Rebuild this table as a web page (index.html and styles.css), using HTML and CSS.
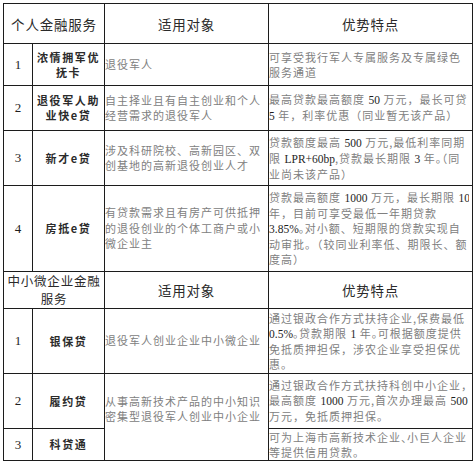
FILE: index.html
```html
<!DOCTYPE html>
<html lang="zh">
<head>
<meta charset="utf-8">
<link rel="stylesheet" href="styles.css">
</head>
<body>
<div class="wrap">
<table class="grid">
  <colgroup>
    <col class="c1"><col class="c2"><col class="c3"><col class="c4">
  </colgroup>
  <tr class="h40">
    <th colspan="2" class="hd">个人金融服务</th>
    <th class="hd">适用对象</th>
    <th class="hd">优势特点</th>
  </tr>
  <tr class="h42">
    <td class="num">1</td>
    <td class="name">浓情拥军优<br>抚卡</td>
    <td class="who">退役军人</td>
    <td class="adv"><div class="clip">可享受我行军人专属服务及专属绿色<br>服务通道</div></td>
  </tr>
  <tr class="h45">
    <td class="num">2</td>
    <td class="name">退役军人助<br>业快e贷</td>
    <td class="who">自主择业且有自主创业和个人<br>经营需求的退役军人</td>
    <td class="adv"><div class="clip">最高贷款最高额度 <span class="n">50</span> 万元，最长可贷<br><span class="n">5</span> 年，利率优惠（同业暂无该产品）</div></td>
  </tr>
  <tr class="h55">
    <td class="num">3</td>
    <td class="name">新才e贷</td>
    <td class="who">涉及科研院校、高新园区、双<br>创基地的高新退役创业人才</td>
    <td class="adv"><div class="clip">贷款额度最高 <span class="n">500</span> 万元<span class="p">,</span>最低利率同期<br>限 <span class="n">LPR+60bp</span><span class="p">,</span>贷款最长期限 <span class="n">3</span> 年<span class="h">。</span>（同<br>业尚未该产品）</div></td>
  </tr>
  <tr class="h86">
    <td class="num">4</td>
    <td class="name">房抵e贷</td>
    <td class="who">有贷款需求且有房产可供抵押<br>的退役创业的个体工商户或小<br>微企业主</td>
    <td class="adv"><div class="clip">贷款最高额度 <span class="n">1000</span> 万元，最长期限 <span class="n">10</span><br>年，目前可享受最低一年期贷款<br><span class="n">3.85%</span><span class="h">。</span>对小额、短期限的贷款实现自<br>动审批。（较同业利率低、期限长、额<br>度高）</div></td>
  </tr>
  <tr class="h36">
    <th colspan="2" class="hd hd2">中小微企业金融<br>服务</th>
    <th class="hd">适用对象</th>
    <th class="hd">优势特点</th>
  </tr>
  <tr class="h65">
    <td class="num">1</td>
    <td class="name">银保贷</td>
    <td class="who">退役军人创业企业中小微企业</td>
    <td class="adv"><div class="clip">通过银政合作方式扶持企业<span class="p">,</span>保费最低<br><span class="n">0.5%</span><span class="h">。</span>贷款期限 <span class="n">1</span> 年<span class="h">。</span>可根据额度提供<br>免抵质押担保，涉农企业享受担保优<br>惠。</div></td>
  </tr>
  <tr class="h55">
    <td class="num">2</td>
    <td class="name">履约贷</td>
    <td class="who span" rowspan="2">从事高新技术产品的中小知识<br>密集型退役军人创业中小企业</td>
    <td class="adv"><div class="clip">通过银政合作方式扶持科创中小企业<span class="h">，</span><br>最高额度 <span class="n">1000</span> 万元<span class="p">,</span>首次办理最高 <span class="n">500</span><br>万元，免抵质押担保。</div></td>
  </tr>
  <tr class="h32">
    <td class="num">3</td>
    <td class="name">科贷通</td>
    <td class="adv"><div class="clip">可为上海市高新技术企业<span class="h">、</span>小巨人企业<br>等提供信用贷款。</div></td>
  </tr>
</table>
</div>
</body>
</html>
```

FILE: styles.css
```css
html, body {
  margin: 0;
  padding: 0;
  background: #ffffff;
}

.wrap {
  padding: 3px 0 0 3px;
}

.grid {
  border-collapse: collapse;
  table-layout: fixed;
  width: 469px;
  font-family: "Noto Sans CJK SC", "Noto Sans", sans-serif;
}

.c1 { width: 29px; }
.c2 { width: 72px; }
.c3 { width: 164px; }
.c4 { width: 204px; }

.grid th,
.grid td {
  border: 1px solid #1c1c1c;
  padding: 0;
  vertical-align: middle;
  white-space: nowrap;
}

.h40 { height: 40px; }
.h42 { height: 42px; }
.h45 { height: 45px; }
.h55 { height: 55px; }
.h86 { height: 86px; }
.h36 { height: 36px; }
.h65 { height: 65px; }
.h32 { height: 32px; }

.hd {
  font-weight: normal;
  font-size: 13.5px;
  letter-spacing: 0.8px;
  color: #2a2a2a;
  text-align: center;
  line-height: 18px;
}

.hd2 {
  font-size: 12.5px;
  letter-spacing: 0.8px;
  line-height: 18px;
}

.num {
  text-align: center;
  font-family: "Liberation Serif", serif;
  font-size: 13px;
  color: #1e1e1e;
}

.name {
  text-align: center;
  font-size: 11px;
  font-weight: bold;
  letter-spacing: 1.6px;
  line-height: 15px;
  color: #2b2b2b;
}

.who {
  font-size: 11px;
  letter-spacing: 1px;
  line-height: 15.5px;
  color: #808080;
  padding-left: 5px;
}

.who.span {
  padding-bottom: 16px;
}

.adv {
  font-size: 11px;
  letter-spacing: 1px;
  line-height: 15px;
  color: #808080;
  padding-left: 2px;
}

.clip {
  overflow: hidden;
  width: 200px;
}

.n {
  font-family: "Liberation Serif", serif;
  font-size: 11.5px;
  letter-spacing: 0;
  color: #1e1e1e;
}

.p {
  letter-spacing: 1px;
}

.h {
  font-feature-settings: "halt";
  letter-spacing: 0.5px;
}
```
